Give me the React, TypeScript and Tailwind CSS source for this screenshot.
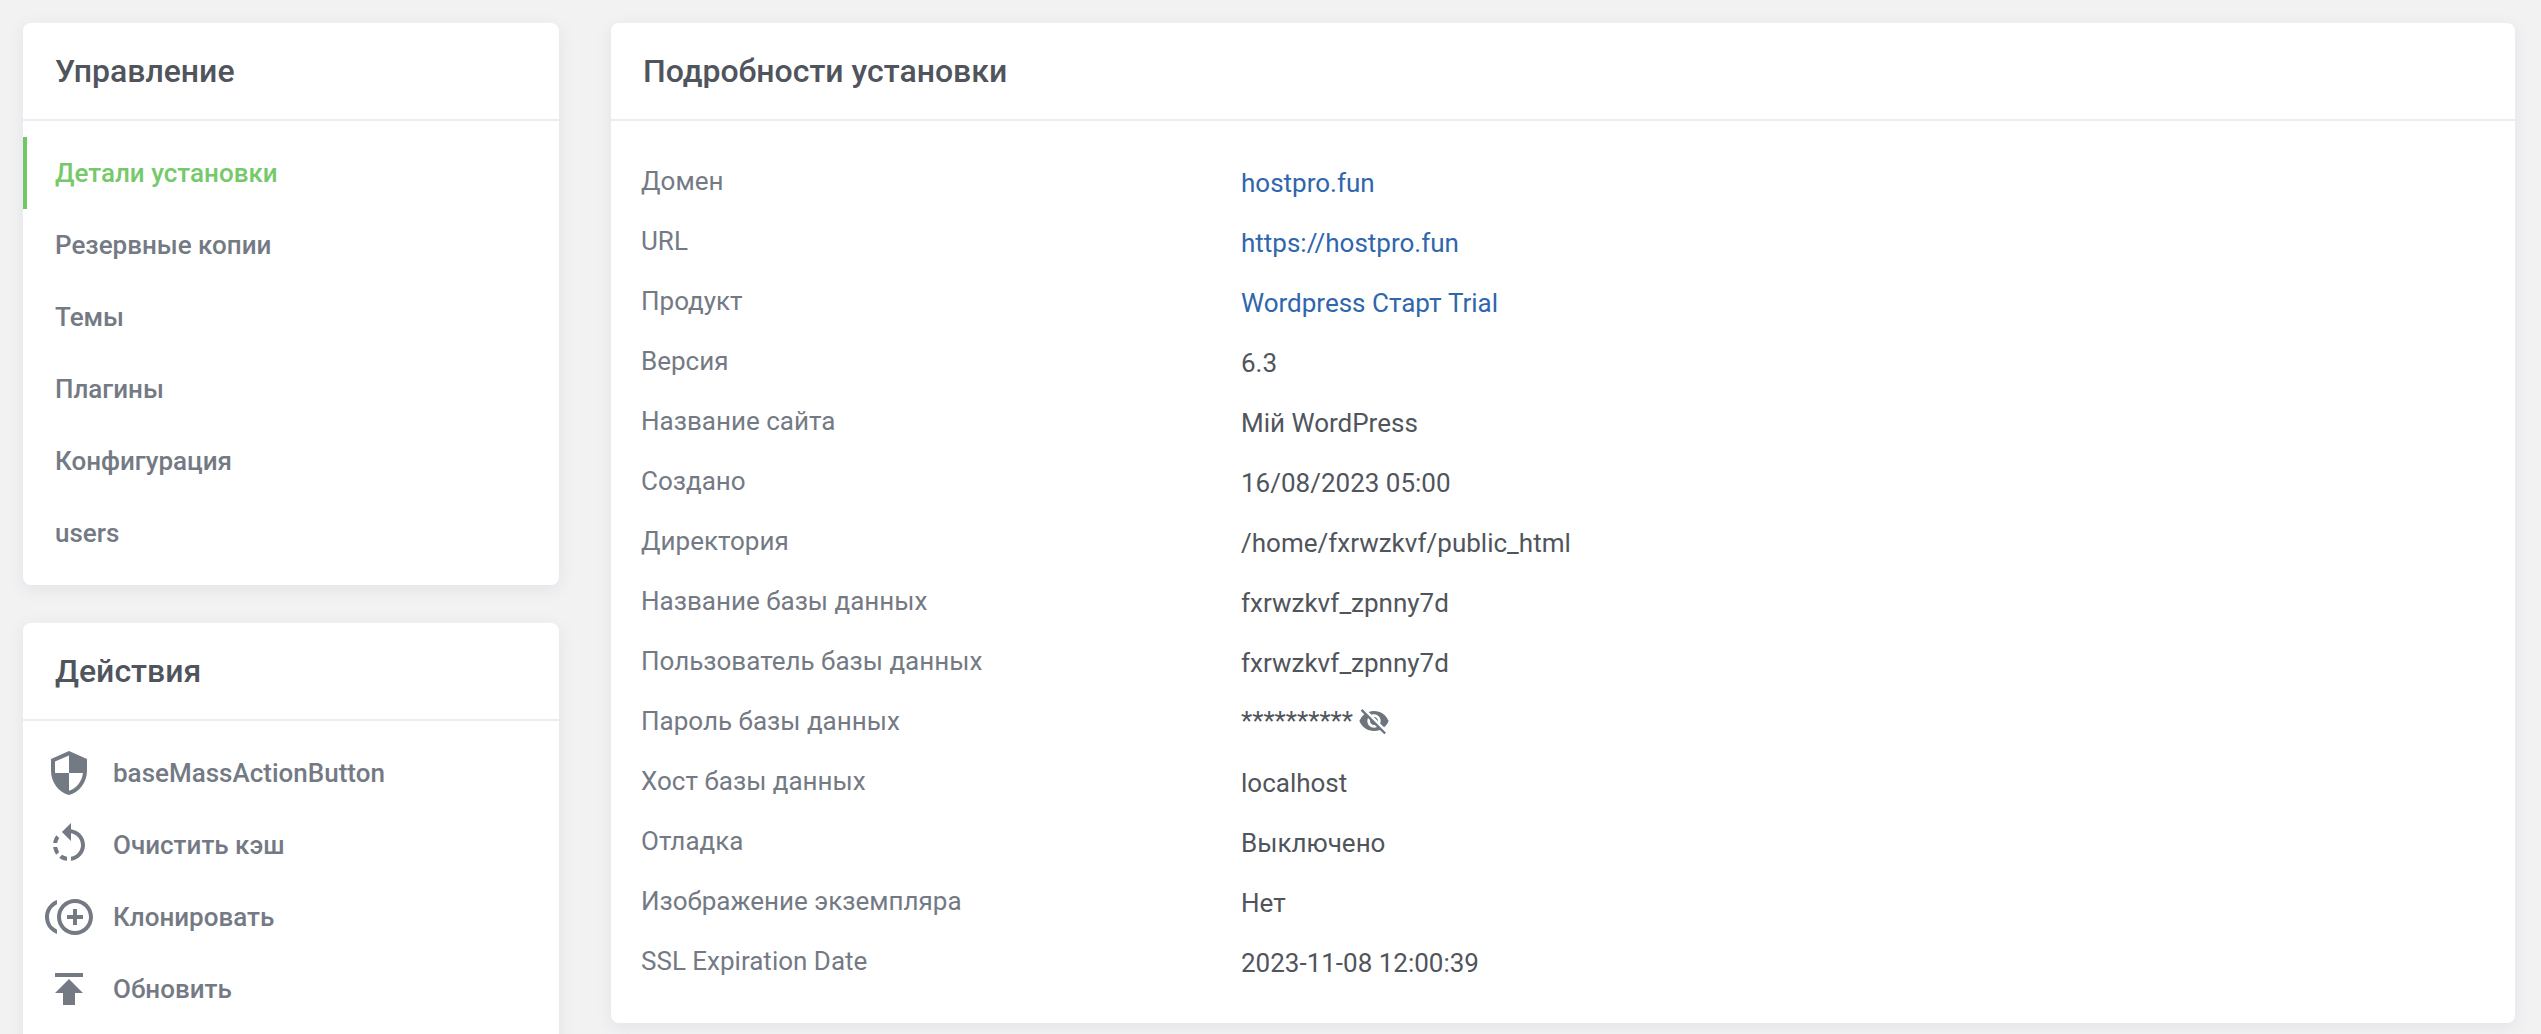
import type { ReactNode } from "react";
import {
  MdSecurity,
  MdRotateLeft,
  MdControlPointDuplicate,
  MdPublish,
  MdVisibilityOff,
} from "react-icons/md";

const menuItems = ["Детали установки", "Резервные копии", "Темы", "Плагины", "Конфигурация", "users"];

const actions = [
  { label: "baseMassActionButton", icon: MdSecurity },
  { label: "Очистить кэш", icon: MdRotateLeft },
  { label: "Клонировать", icon: MdControlPointDuplicate },
  { label: "Обновить", icon: MdPublish },
];

const details: { label: string; value: ReactNode; link?: boolean }[] = [
  { label: "Домен", value: "hostpro.fun", link: true },
  { label: "URL", value: "https://hostpro.fun", link: true },
  { label: "Продукт", value: "Wordpress Старт Trial", link: true },
  { label: "Версия", value: "6.3" },
  { label: "Название сайта", value: "Мій WordPress" },
  { label: "Создано", value: "16/08/2023 05:00" },
  { label: "Директория", value: "/home/fxrwzkvf/public_html" },
  { label: "Название базы данных", value: "fxrwzkvf_zpnny7d" },
  { label: "Пользователь базы данных", value: "fxrwzkvf_zpnny7d" },
  {
    label: "Пароль базы данных",
    value: (
      <span className="-mt-[4px] flex items-center gap-[5px]">
        **********
        <MdVisibilityOff className="h-[32px] w-[32px] text-[#6c757d]" />
      </span>
    ),
  },
  { label: "Хост базы данных", value: "localhost" },
  { label: "Отладка", value: "Выключено" },
  { label: "Изображение экземпляра", value: "Нет" },
  { label: "SSL Expiration Date", value: "2023-11-08 12:00:39" },
];

function CardHeader({ title }: { title: string }) {
  return (
    <div className="flex h-[98px] items-center border-b-2 border-[#ebebf0] px-[32px]">
      <h2 className="text-[32px] font-medium leading-none text-[#50545c]">{title}</h2>
    </div>
  );
}

export default function App() {
  return (
    <div className="flex h-screen gap-[52px] overflow-hidden bg-[#f2f2f3] pl-[23px] pr-[26px] pt-[23px] font-['Roboto',sans-serif]">
      <aside className="flex w-[536px] shrink-0 flex-col gap-[38px]">
        <section className="rounded-lg bg-white pb-[16px] shadow-[0_4px_16px_rgba(120,125,150,0.12)]">
          <CardHeader title="Управление" />
          <nav className="pt-[16px]">
            {menuItems.map((item, i) => (
              <div
                key={item}
                className={
                  i === 0
                    ? "flex h-[72px] items-center border-l-[4px] border-[#72c764] pl-[28px] text-[26px] font-medium text-[#76c96a]"
                    : "flex h-[72px] items-center pl-[32px] text-[26px] font-medium text-[#747a84]"
                }
              >
                {item}
              </div>
            ))}
          </nav>
        </section>

        <section className="h-[460px] shrink-0 rounded-lg bg-white shadow-[0_4px_16px_rgba(120,125,150,0.12)]">
          <CardHeader title="Действия" />
          <div className="pt-[16px]">
            {actions.map(({ label, icon: Icon }) => (
              <div
                key={label}
                className="flex h-[72px] items-center gap-[20px] pl-[22px] text-[26px] font-medium text-[#747a84]"
              >
                <Icon className="h-[48px] w-[48px] shrink-0" />
                {label}
              </div>
            ))}
          </div>
        </section>
      </aside>

      <main className="h-[1000px] min-w-0 flex-1 rounded-lg bg-white shadow-[0_4px_16px_rgba(120,125,150,0.12)]">
        <CardHeader title="Подробности установки" />
        <div className="pb-[31px] pt-[31px]">
          {details.map((row) => (
            <div key={row.label} className="flex h-[60px] items-center pl-[30px] text-[26px]">
              <div className="w-[600px] shrink-0 pb-[1px] text-[#747a84]">{row.label}</div>
              <div className={row.link ? "pt-[2px] text-[#2f66ad]" : "pt-[2px] text-[#50555c]"}>{row.value}</div>
            </div>
          ))}
        </div>
      </main>
    </div>
  );
}
